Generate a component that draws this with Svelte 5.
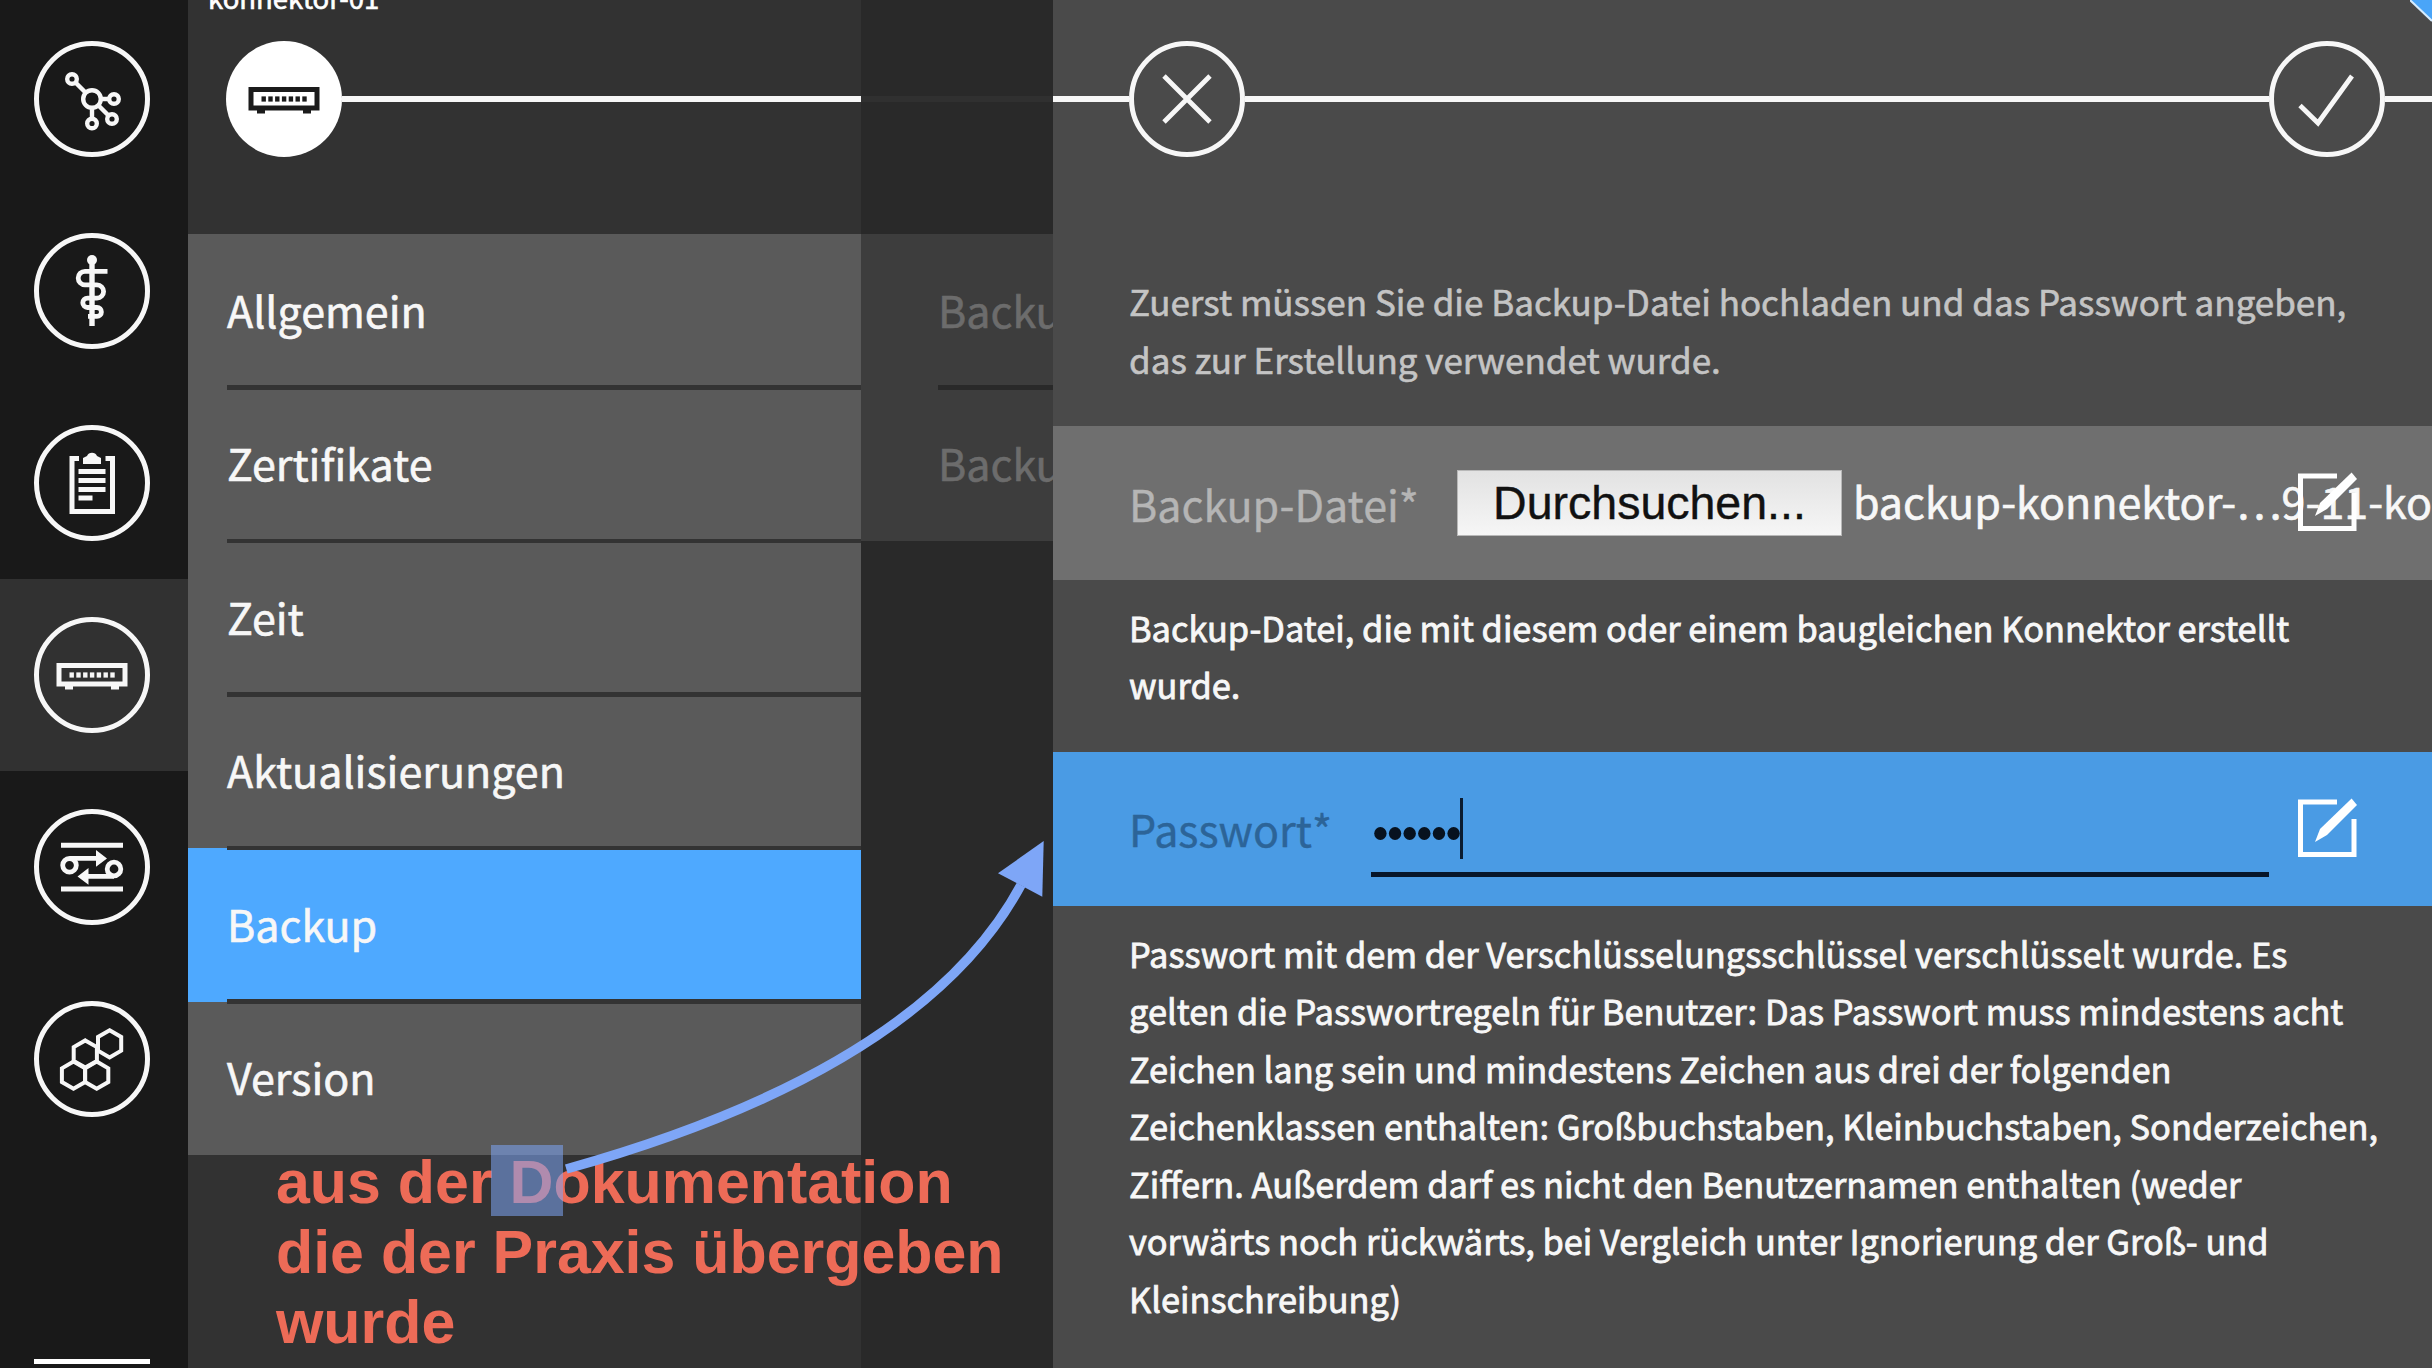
<script>
  const navIcons = ['network', 'medical', 'clipboard', 'device', 'transfer', 'modules'];
  const menu = ['Allgemein', 'Zertifikate', 'Zeit', 'Aktualisierungen', 'Backup', 'Version'];
  const active = 'Backup';
  const intro = [
    'Zuerst müssen Sie die Backup-Datei hochladen und das Passwort angeben,',
    'das zur Erstellung verwendet wurde.'
  ];
  const fileHelp = ['Backup-Datei, die mit diesem oder einem baugleichen Konnektor erstellt', 'wurde.'];
  const passwordHelp = [
    'Passwort mit dem der Verschlüsselungsschlüssel verschlüsselt wurde. Es',
    'gelten die Passwortregeln für Benutzer: Das Passwort muss mindestens acht',
    'Zeichen lang sein und mindestens Zeichen aus drei der folgenden',
    'Zeichenklassen enthalten: Großbuchstaben, Kleinbuchstaben, Sonderzeichen,',
    'Ziffern. Außerdem darf es nicht den Benutzernamen enthalten (weder',
    'vorwärts noch rückwärts, bei Vergleich unter Ignorierung der Groß- und',
    'Kleinschreibung)'
  ];
  const leds = [0, 1, 2, 3, 4, 5, 6];
  const dots = [0, 1, 2, 3, 4, 5];
  const hexagons = [[75.6, 42.8], [51.3, 53], [39.5, 74.2], [62.7, 74.2]];
</script>

{#snippet device()}
  <rect x="25" y="48.5" width="66" height="18.5" fill="none" stroke="currentColor" stroke-width="5" />
  {#each leds as i}
    <rect x={35.5 + i * 6.8} y="55.4" width="4.4" height="5.2" fill="currentColor" stroke="none" />
  {/each}
  <path d="M31 69h8v3.500h-8zM77 69h8v3.500h-8z" fill="currentColor" stroke="none" />
{/snippet}

{#snippet icon(name)}
  <svg class="icon" viewBox="0 0 116 116" fill="none" stroke="currentColor">
    <circle cx="58" cy="58" r="55.5" stroke-width="5" />
    {#if name === 'network'}
      <g stroke-width="4.4">
        <circle cx="58" cy="58" r="8.8" />
        <circle cx="38" cy="38" r="4.8" />
        <circle cx="80" cy="58" r="4.8" />
        <circle cx="78" cy="78" r="4.8" />
        <circle cx="58" cy="82.5" r="4.8" />
        <path d="M41.5 41.5l10 10M67 58h8M64.5 64.5l10 10M58 67v10.5" />
      </g>
    {:else if name === 'medical'}
      <circle cx="58" cy="27" r="5" fill="currentColor" stroke="none" />
      <path stroke-width="5.4" d="M58 27v66" />
      <path stroke-width="4.8" d="M73.500 38.3H51a6.800 6.800 0 0 0 0 13.600h12a6.600 6.600 0 0 1 0 13.200h-9.500a4.700 4.700 0 0 0 0 9.400h9.500a4.400 4.400 0 0 1 0 8.800h-9" />
    {:else if name === 'clipboard'}
      <path stroke-width="5" d="M45 33.5h-7v53h40.500v-53h-7" />
      <path fill="currentColor" stroke="none" d="M49 39v-6l4-2a5.5 5.5 0 0 1 10 0l4 2v6z" />
      <path stroke-width="4.8" d="M44.500 46.500h27M44.500 55.500h27M44.500 64.500h27M44.500 73h14" />
    {:else if name === 'device'}
      {@render device()}
    {:else if name === 'transfer'}
      <path stroke-width="5" d="M27 36.200h62M27 80h62" />
      <g stroke-width="4.8">
        <circle cx="35.5" cy="56.300" r="6.800" />
        <circle cx="80" cy="60" r="6.800" />
        <path d="M36 49.400h28M80 67.400H52" />
      </g>
      <path fill="currentColor" stroke="none" d="M62 41l11 8.400-11 8.400zM54.500 59l-11 8.400 11 8.400z" />
    {:else}
      {#each hexagons as [x, y]}
        <path stroke-width="4" d="M{x} {y - 13.6}l11.600 6.700v13.800l-11.600 6.700-11.600-6.700v-13.800z" />
      {/each}
    {/if}
  </svg>
{/snippet}

{#snippet editIcon()}
  <svg class="edit" viewBox="0 0 60 60">
    <path d="M39 4H2.500v52.500h53.500V21" fill="none" stroke="#fff" stroke-width="5" />
    <path d="M53.600 0.500L59 7 29 37l-12 7 5-13z" fill="#fff" />
  </svg>
{/snippet}

<div class="screen">
  <nav>
    {#each navIcons as name}
      <div class="nav-item" class:current={name === 'device'}>{@render icon(name)}</div>
    {/each}
    <div class="nav-rule"></div>
  </nav>

  <section class="primary">
    <header>
      <span class="host">konnektor-01</span>
      <svg class="badge" viewBox="0 0 116 116">
        <circle cx="58" cy="58" r="58" fill="#fff" />
        {@render device()}
      </svg>
      <i></i>
    </header>
    <div class="list">
      {#each menu as item}
        <div class="entry" class:active={item === active}><span>{item}</span></div>
      {/each}
    </div>
  </section>

  <section class="secondary">
    <header><i></i></header>
    <div class="list">
      <div class="entry"><span>Backup</span></div>
      <div class="entry"><span>Backup</span></div>
    </div>
  </section>

  <main>
    <header>
      <i class="lead"></i>
      <svg class="icon" viewBox="0 0 116 116" fill="none" stroke="currentColor">
        <circle cx="58" cy="58" r="55.5" stroke-width="5" />
        <path stroke-width="4.8" d="M35 35l46 46M81 35L35 81" />
      </svg>
      <i class="fill"></i>
      <svg class="icon" viewBox="0 0 116 116" fill="none" stroke="currentColor">
        <circle cx="58" cy="58" r="55.5" stroke-width="5" />
        <path stroke-width="4.8" d="M31 64.5l18 17.5 34-47" />
      </svg>
      <i class="tail"></i>
      <svg class="corner" viewBox="0 0 22 22"><path d="M0 0h22v21z" fill="#4aa5f8" /><path d="M0 0l22 21" stroke="#d5ecff" stroke-width="2" /></svg>
    </header>
    <div class="copy intro">{#each intro as line}<p>{line}</p>{/each}</div>
    <div class="field file">
      <label for="file">Backup-Datei*</label>
      <button id="file">Durchsuchen...</button>
      <span class="filename">backup-konnektor-…9-11-ko</span>
      {@render editIcon()}
    </div>
    <div class="copy">{#each fileHelp as line}<p>{line}</p>{/each}</div>
    <div class="field password">
      <span class="label">Passwort*</span>
      <div class="input">
        <svg class="dots" viewBox="0 0 90 90">
          {#each dots as i}<ellipse cx={9.4 + i * 14.64} cy="48.5" rx="6.2" ry="6.5" />{/each}
          <path d="M90.500 13v61" stroke="#0b1c30" stroke-width="3" />
        </svg>
      </div>
      {@render editIcon()}
    </div>
    <div class="copy">{#each passwordHelp as line}<p>{line}</p>{/each}</div>
  </main>

  <div class="note">
    <p>aus der Dokumentation</p>
    <p>die der Praxis übergeben</p>
    <p>wurde</p>
  </div>
  <div class="marker"></div>
  <svg class="arrow" viewBox="0 0 2432 1368">
    <path d="M566.3 1169Q921.5 1069.5 1021 885" fill="none" stroke="#7ea6f7" stroke-width="9.6" />
    <path d="M1043.7 841l-1.400 55.700-44.300-23.400z" fill="#7ea6f7" />
  </svg>
</div>

<style>
  :global(body) { margin: 0; overflow: hidden; background: #323232; }
  * { box-sizing: border-box; }
  p { margin: 0; }
  .screen {
    position: relative;
    display: flex;
    width: 2432px;
    height: 1368px;
    overflow: hidden;
    color: #f7f7f7;
    font-family: 'Noto Sans CJK SC', 'Noto Sans', sans-serif;
    font-size: 43px;
  }
  svg { display: block; flex: none; }
  nav { display: flex; flex-direction: column; width: 188px; padding-top: 3px; background: #191919; }
  .nav-item { display: flex; align-items: center; height: 192px; padding-left: 34px; }
  .nav-item.current { background: #313131; }
  .nav-rule { width: 116px; height: 5px; margin: 204px 0 0 34px; background: #fff; }
  .icon { width: 116px; height: 116px; }
  header { position: relative; display: flex; align-items: center; height: 198px; margin-bottom: 36px; }
  header i { height: 5.5px; background: #f7f7f7; }
  .primary { width: 673px; background: #323232; }
  .primary header { padding-left: 38px; }
  .primary header i { flex: 1; }
  .badge { width: 116px; height: 116px; color: #1b1b1b; }
  .host {
    position: absolute;
    left: 20px;
    top: -21px;
    color: #fff;
    font-size: 27.5px;
    line-height: 36px;
    -webkit-text-stroke: 0.6px;
  }
  .entry {
    position: relative;
    display: flex;
    align-items: center;
    height: 153.5px;
    padding: 0 0 4px 39px;
    background: #5a5a5a;
    white-space: nowrap;
    -webkit-text-stroke: 0.6px;
  }
  .entry:not(:last-child)::after {
    content: '';
    position: absolute;
    z-index: 1;
    left: 39px;
    right: 0;
    bottom: -2px;
    height: 4.5px;
    background: #333;
  }
  .entry.active { background: #4ea9ff; }
  .secondary { width: 192px; overflow: hidden; background: #292929; color: #6c6c6c; }
  .secondary header i { flex: 1; background: #303030; }
  .secondary .entry { padding-left: 77px; background: #3d3d3d; }
  .secondary .entry::after { left: 77px; background: #292929; }
  main { width: 1379px; overflow: hidden; background: #4a4a4a; }
  main header i.lead { width: 76px; }
  main header i.fill { flex: 1; }
  main header i.tail { width: 47px; }
  .corner { position: absolute; top: 0; right: 0; width: 22px; height: 22px; }
  .copy {
    height: 172.5px;
    padding: 19px 0 0 76px;
    font-size: 34.4px;
    line-height: 57.6px;
    white-space: nowrap;
    -webkit-text-stroke: 0.8px;
  }
  .copy:last-child { height: auto; }
  .copy.intro { height: 192px; padding-top: 38px; color: #c4c4c4; font-size: 35px; -webkit-text-stroke: 0.6px; }
  .field { position: relative; display: flex; align-items: center; height: 153.5px; padding-left: 76px; white-space: nowrap; }
  .file { background: #6f6f6f; color: #f7f7f7; }
  .file label { width: 328px; color: #b5b5b5; -webkit-text-stroke: 0.4px; }
  .file button {
    width: 385px;
    height: 66px;
    margin-right: 11px;
    padding: 0;
    border: 1px solid #b8b8b8;
    border-radius: 0;
    background: linear-gradient(#e2e2e2, #f6f6f6);
    color: #111;
    font: 46.5px 'Liberation Sans', sans-serif;
    -webkit-text-stroke: 0.4px;
  }
  .filename { padding-bottom: 5px; -webkit-text-stroke: 0.6px; }
  .password { background: #4a9be4; }
  .label { width: 242px; padding-bottom: 2px; color: #2c6498; -webkit-text-stroke: 0.4px; }
  .input { width: 898px; height: 90px; margin-top: 7px; border-bottom: 5px solid #07162a; }
  .dots { width: 90px; height: 90px; margin-top: -2px; fill: #07121f; overflow: visible; }
  .edit { position: absolute; left: 1245px; top: 46px; width: 60px; height: 60px; }
  .note {
    position: absolute;
    left: 276px;
    top: 1147px;
    color: #ed6b57;
    font: bold 60.9px/70px 'Liberation Sans', sans-serif;
    white-space: nowrap;
  }
  .marker { position: absolute; left: 491px; top: 1145px; width: 72px; height: 71px; background: rgba(125, 165, 245, 0.55); }
  .arrow { position: absolute; inset: 0; width: 2432px; height: 1368px; }
</style>
